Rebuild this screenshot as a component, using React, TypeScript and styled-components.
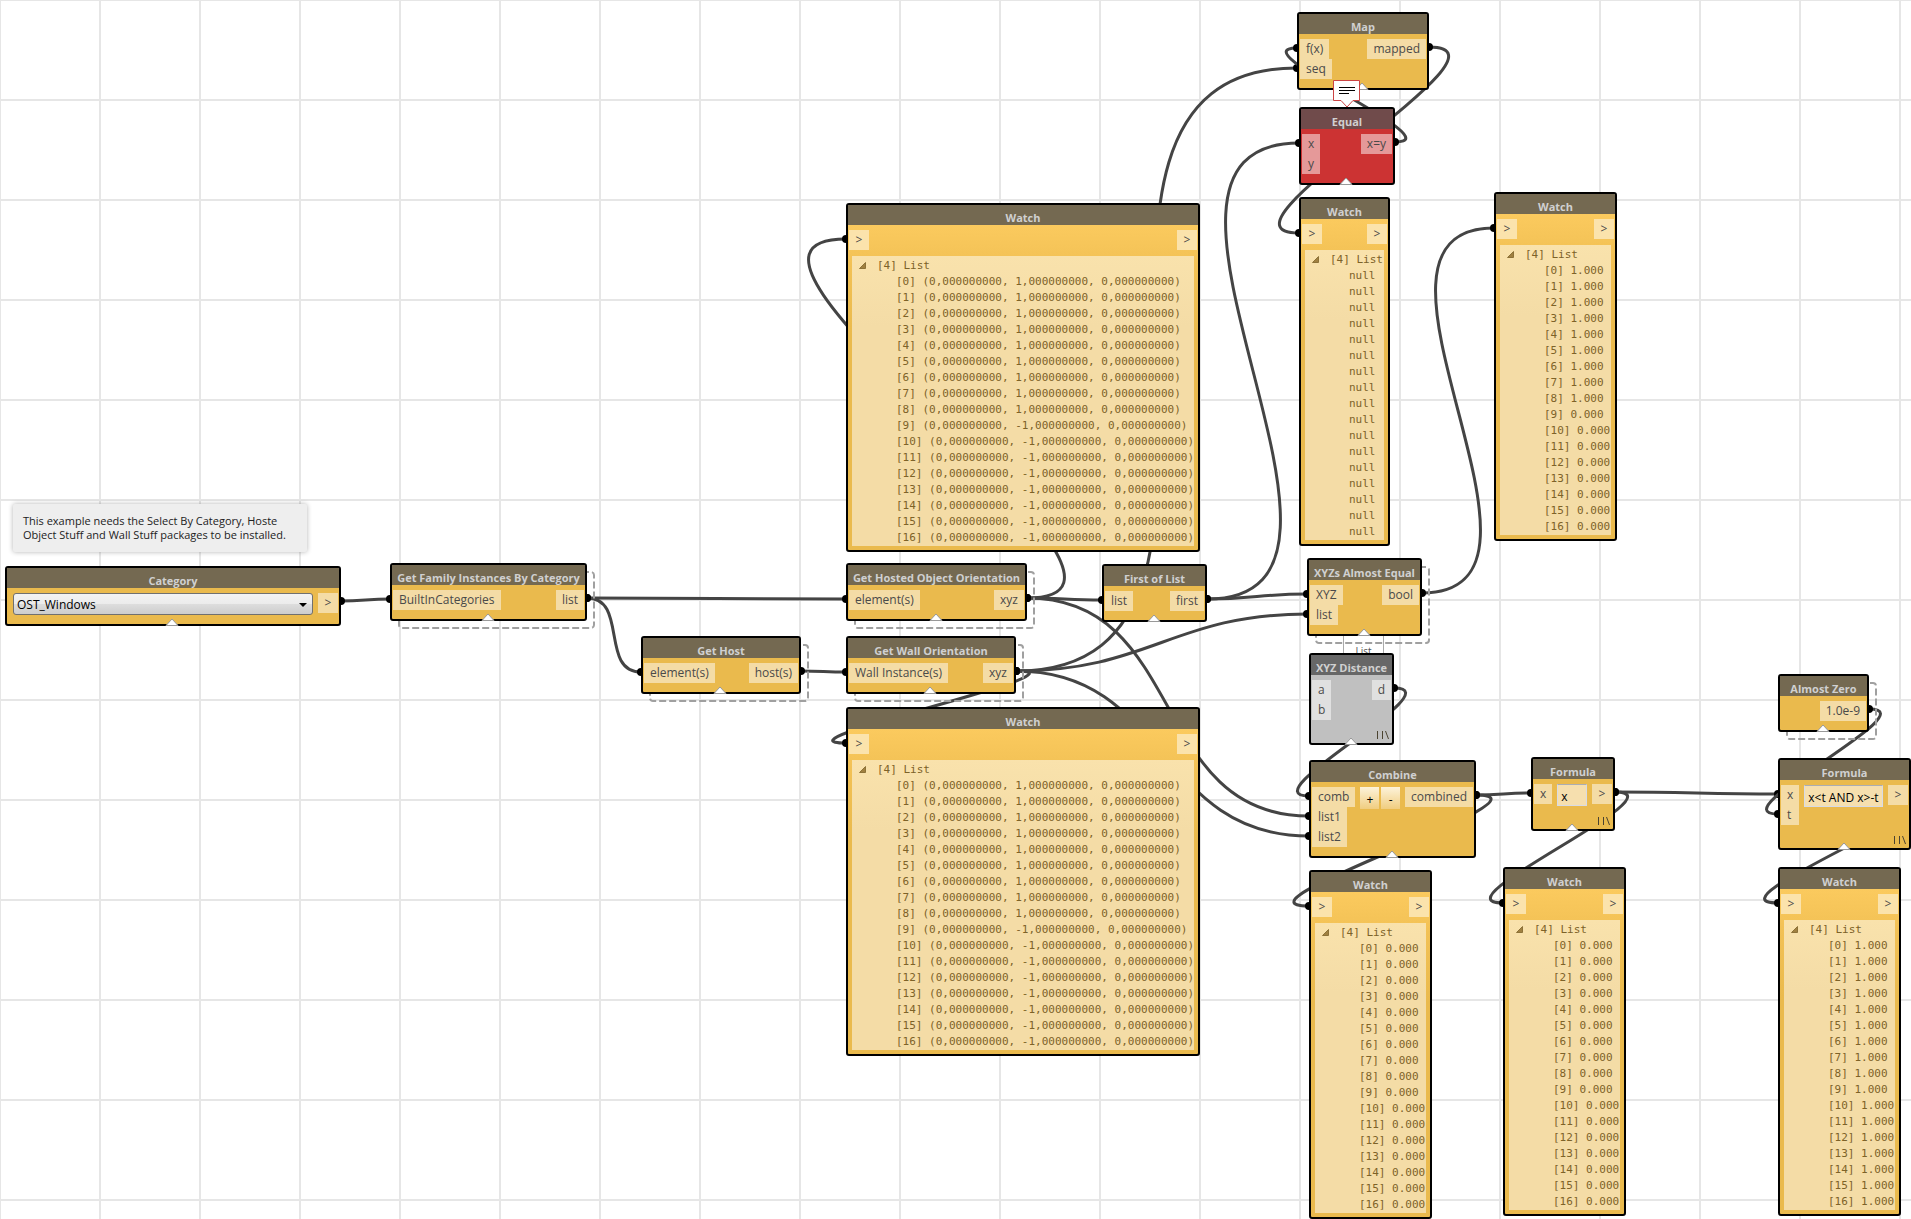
import React from "react";
import styled, { createGlobalStyle } from "styled-components";

const GlobalStyle = createGlobalStyle`
  body {
    margin: 0;
    background: #fff;
    font-family: "Open Sans", "Noto Sans", sans-serif;
    font-size: 12px;
  }
`;

/* ---------- graph model ---------- */

type Tone = "idle" | "error" | "dead" | "watch";

interface NodeModel {
  id: string;
  title: string;
  x: number;
  y: number;
  width: number;
  tone?: Tone;
  inputs: string[];
  output: string;
  control?: React.ReactNode;
  list?: string[];
  custom?: boolean;
  lacing?: boolean;
}

const tones: Record<Tone, { header: string; body: string; port: string }> = {
  idle: { header: "#746951", body: "#eaba4d", port: "#f4dca6" },
  watch: {
    header: "#746951",
    body: "linear-gradient(#fbca5e, #fbca5e 20px, #f2c155 60px, #eaba4d 130px)",
    port: "#fbe3ac",
  },
  error: { header: "#704b4b", body: "#cc3333", port: "#e59999" },
  dead: { header: "#676767", body: "#c0c0c0", port: "#e0e0e0" },
};

const numbered = (value: (index: number) => string) =>
  Array.from({ length: 17 }, (_, i) => `[${i}] ${value(i)}`);

const vectors = numbered((i) => `(0,000000000, ${i < 9 ? "1" : "-1"},000000000, 0,000000000)`);
const zeros = numbered(() => "0.000");
const ones = numbered(() => "1.000");
const mixed = numbered((i) => (i < 9 ? "1.000" : "0.000"));
const nulls = Array.from({ length: 17 }, () => "null");

/* ---------- canvas ---------- */

const Canvas = styled.main`
  position: relative;
  height: 100vh;
  overflow: hidden;
  background-color: #fff;
  background-image: linear-gradient(90deg, #e6e6e6 2px, transparent 2px),
    linear-gradient(#e6e6e6 2px, transparent 2px);
  background-size: 100px 100px;
  background-position: -1px -1px;
`;

const WireLayer = styled.svg`
  position: absolute;
  inset: 0;
  width: 100%;
  height: 100%;
  fill: none;
`;

const Note = styled.aside`
  position: absolute;
  left: 13px;
  top: 504px;
  width: 274px;
  padding: 10px;
  background: #eee;
  color: #222;
  font-size: 11px;
  line-height: 14px;
  white-space: pre;
  border-radius: 2px;
  box-shadow: 0 0 5px rgba(0, 0, 0, 0.3);
`;

const Preview = styled.div`
  position: absolute;
  left: 1343px;
  top: 634px;
  width: 39px;
  height: 30px;
  padding-top: 10px;
  border: 1px solid #aaa;
  border-width: 0 1px;
  color: #555;
  font-size: 10px;
  line-height: 14px;
  text-align: center;
`;

/* ---------- node ---------- */

const NodeFrame = styled.section<{ $x: number; $y: number; $width: number }>`
  position: absolute;
  left: ${(p) => p.$x}px;
  top: ${(p) => p.$y}px;
  width: ${(p) => p.$width}px;
`;

const StackOutline = styled.svg`
  position: absolute;
  left: 8px;
  top: 8px;
  width: 100%;
  height: 100%;
  overflow: visible;
  fill: none;
  stroke: #a0a0a0;
  stroke-width: 2;
  stroke-dasharray: 7 3;
`;

const Shell = styled.div<{ $tone: Tone }>`
  position: relative;
  box-sizing: border-box;
  border: 2px solid #000;
  border-radius: 3px;
  background: ${(p) => tones[p.$tone].body};
`;

const Title = styled.h2<{ $tone: Tone }>`
  margin: 0;
  height: 20px;
  padding-top: 3px;
  box-sizing: border-box;
  background: ${(p) => tones[p.$tone].header};
  color: #d0d0d0;
  font-size: 11px;
  font-weight: 700;
  line-height: 20px;
  text-align: center;
  white-space: nowrap;
`;

const Body = styled.div`
  display: flex;
  align-items: flex-start;
  padding: 5px 1px 9px;
`;

const Inputs = styled.div`
  display: flex;
  flex-direction: column;
  align-items: flex-start;
`;

const Middle = styled.div`
  flex: 1;
  display: flex;
  justify-content: center;
  gap: 2px;
  min-width: 0;
  padding: 0 5px;
`;

const Port = styled.span<{ $tone: Tone }>`
  box-sizing: border-box;
  height: 20px;
  min-width: 18px;
  padding: 0 6px;
  background: ${(p) => tones[p.$tone].port};
  color: #4a4a4a;
  font-size: 12px;
  line-height: 20px;
  white-space: nowrap;
`;

const ArrowPort = styled(Port)`
  width: 20px;
  padding: 0;
  text-align: center;
`;

const Lacing = styled.svg`
  display: block;
  width: 13px;
  height: 8px;
  margin: 2px 3px 4px auto;
  fill: none;
  stroke: #4b4330;
`;

const Handle = styled.svg`
  position: absolute;
  left: calc(50% - 8px);
  bottom: -2px;
  width: 14px;
  height: 8px;
`;

const ListPanel = styled.div`
  margin: -3px 4px 4px;
  height: 290px;
  background: linear-gradient(#f9e2ac, #f4dca6 70px);
  color: #7d6228;
  font-family: "DejaVu Sans Mono", "Liberation Mono", monospace;
  font-size: 11px;
  line-height: 16px;
`;

const ListHead = styled.div`
  display: flex;
  align-items: center;
  gap: 11px;
  padding: 2px 0 0 7px;
  white-space: pre;
`;

const Items = styled.ul`
  margin: 0;
  padding: 0 0 0 44px;
  list-style: none;
  white-space: pre;
`;

const CategorySelect = styled.select`
  flex: 1;
  min-width: 0;
  height: 22px;
  padding: 0 0 0 3px;
  appearance: none;
  border: 1px solid #707070;
  border-radius: 3px;
  background: linear-gradient(#f3f3f3, #ebebeb 50%, #dddddd 50%, #cdcdcd);
  color: #000;
  font: inherit;
`;

const SelectBox = styled.label`
  position: relative;
  flex: 1;
  display: flex;
`;

const Caret = styled.span`
  position: absolute;
  right: 6px;
  top: 10px;
  border: 4px solid transparent;
  border-top-color: #000;
  border-bottom-width: 0;
  pointer-events: none;
`;

const FormulaInput = styled.input`
  flex: 1;
  min-width: 0;
  width: 0;
  box-sizing: border-box;
  height: 22px;
  padding: 2px 3px 0;
  border: 1px solid #d8dbe6;
  border-top-color: #abadb3;
  background: #f6dfae;
  color: #000;
  font: inherit;
`;

const StepButton = styled.button`
  width: 20px;
  height: 22px;
  padding: 2px 0 0;
  border: 0;
  background: linear-gradient(#fdf3da, #f0cd80);
  color: #000;
  font: inherit;
`;

const InfoBubble = styled.svg`
  position: absolute;
  left: 1332px;
  top: 79px;
  width: 30px;
  height: 30px;
  fill: #fff;
`;

const GraphNode = ({ node }: { node: NodeModel }) => {
  const tone = node.tone ?? "idle";
  const height = nodeHeight(node);
  return (
    <NodeFrame $x={node.x} $y={node.y} $width={node.width}>
      {node.custom && (
        <StackOutline aria-hidden="true">
          <rect x="1" y="1" width={node.width - 2} height={height - 2} rx="3" />
        </StackOutline>
      )}
      <Shell $tone={tone}>
        <Title $tone={tone}>{node.title}</Title>
        <Body>
          <Inputs>
            {node.inputs.map((name) =>
              name === ">" ? (
                <ArrowPort key={name} $tone={tone}>{name}</ArrowPort>
              ) : (
                <Port key={name} $tone={tone}>{name}</Port>
              )
            )}
          </Inputs>
          <Middle>{node.control}</Middle>
          {node.output === ">" ? (
            <ArrowPort $tone={tone}>&gt;</ArrowPort>
          ) : (
            <Port $tone={tone}>{node.output}</Port>
          )}
        </Body>
        {node.lacing && (
          <Lacing viewBox="0 0 13 8" aria-hidden="true">
            <path d="M1.5 0V8M6.5 0V8M9.5 0L12.5 8" />
          </Lacing>
        )}
        {node.list ? (
          <ListPanel>
            <ListHead>
              <svg width="7" height="9" aria-hidden="true">
                <path d="M6.5 0.5V6.5H0.5Z" fill="#a08040" stroke="#8d7238" />
              </svg>
              [4] List
            </ListHead>
            <Items>
              {node.list.map((text, i) => (
                <li key={i}>{text}</li>
              ))}
            </Items>
          </ListPanel>
        ) : (
          <Handle viewBox="0 0 14 8" aria-hidden="true">
            <path d="M1 7.5L7 1L13 7.5Z" fill="#fff" stroke="#999" />
          </Handle>
        )}
      </Shell>
    </NodeFrame>
  );
};

const nodes: NodeModel[] = [
  {
    id: "category", title: "Category", x: 5, y: 566, width: 336, inputs: [], output: ">",
    control: (
      <SelectBox>
        <CategorySelect aria-label="Category" defaultValue="OST_Windows">
          <option>OST_Windows</option>
        </CategorySelect>
        <Caret />
      </SelectBox>
    ),
  },
  { id: "family", title: "Get Family Instances By Category", x: 390, y: 563, width: 197, inputs: ["BuiltInCategories"], output: "list", custom: true },
  { id: "hosted", title: "Get Hosted Object Orientation", x: 846, y: 563, width: 181, inputs: ["element(s)"], output: "xyz", custom: true },
  { id: "first", title: "First of List", x: 1102, y: 564, width: 105, inputs: ["list"], output: "first" },
  { id: "host", title: "Get Host", x: 641, y: 636, width: 160, inputs: ["element(s)"], output: "host(s)", custom: true },
  { id: "wall", title: "Get Wall Orientation", x: 846, y: 636, width: 170, inputs: ["Wall Instance(s)"], output: "xyz", custom: true },
  { id: "watchTop", title: "Watch", x: 846, y: 203, width: 354, tone: "watch", inputs: [">"], output: ">", list: vectors },
  { id: "watchBottom", title: "Watch", x: 846, y: 707, width: 354, tone: "watch", inputs: [">"], output: ">", list: vectors },
  { id: "map", title: "Map", x: 1297, y: 12, width: 132, inputs: ["f(x)", "seq"], output: "mapped" },
  { id: "equal", title: "Equal", x: 1299, y: 107, width: 96, tone: "error", inputs: ["x", "y"], output: "x=y" },
  { id: "watchNull", title: "Watch", x: 1299, y: 197, width: 91, tone: "watch", inputs: [">"], output: ">", list: nulls },
  { id: "watchBool", title: "Watch", x: 1494, y: 192, width: 123, tone: "watch", inputs: [">"], output: ">", list: mixed },
  { id: "almost", title: "XYZs Almost Equal", x: 1307, y: 558, width: 115, inputs: ["XYZ", "list"], output: "bool", custom: true },
  { id: "distance", title: "XYZ Distance", x: 1309, y: 653, width: 85, tone: "dead", inputs: ["a", "b"], output: "d", lacing: true },
  {
    id: "combine", title: "Combine", x: 1309, y: 760, width: 167, inputs: ["comb", "list1", "list2"], output: "combined",
    control: (
      <>
        <StepButton type="button">+</StepButton>
        <StepButton type="button">-</StepButton>
      </>
    ),
  },
  {
    id: "formula", title: "Formula", x: 1531, y: 757, width: 84, inputs: ["x"], output: ">", lacing: true,
    control: <FormulaInput aria-label="Formula" defaultValue="x" />,
  },
  { id: "watchCombine", title: "Watch", x: 1309, y: 870, width: 123, tone: "watch", inputs: [">"], output: ">", list: zeros },
  { id: "watchFormula", title: "Watch", x: 1503, y: 867, width: 123, tone: "watch", inputs: [">"], output: ">", list: zeros },
  { id: "zero", title: "Almost Zero", x: 1778, y: 674, width: 91, inputs: [], output: "1.0e-9", custom: true },
  {
    id: "formulaAnd", title: "Formula", x: 1778, y: 758, width: 133, inputs: ["x", "t"], output: ">", lacing: true,
    control: <FormulaInput aria-label="Formula" defaultValue="x<t AND x>-t" />,
  },
  { id: "watchAnd", title: "Watch", x: 1778, y: 867, width: 123, tone: "watch", inputs: [">"], output: ">", list: ones },
];

function nodeHeight(node: NodeModel) {
  return 38 + 20 * Math.max(1, node.inputs.length);
}

/* [source node, target node, target input index] */
const links: [string, string, number][] = [
  ["category", "family", 0],
  ["family", "hosted", 0],
  ["family", "host", 0],
  ["host", "wall", 0],
  ["hosted", "watchTop", 0],
  ["hosted", "first", 0],
  ["hosted", "combine", 1],
  ["wall", "map", 1],
  ["wall", "almost", 1],
  ["wall", "watchBottom", 0],
  ["wall", "combine", 2],
  ["first", "equal", 0],
  ["first", "almost", 0],
  ["almost", "watchBool", 0],
  ["map", "watchNull", 0],
  ["equal", "map", 0],
  ["distance", "combine", 0],
  ["combine", "formula", 0],
  ["combine", "watchCombine", 0],
  ["formula", "formulaAnd", 0],
  ["formula", "watchFormula", 0],
  ["zero", "formulaAnd", 1],
  ["formulaAnd", "watchAnd", 0],
];

const Wire = ({ from, to, index }: { from: NodeModel; to: NodeModel; index: number }) => {
  const x0 = from.x + from.width;
  const y0 = from.y + 35;
  const x3 = to.x;
  const y3 = to.y + 36 + 20 * index;
  const reach = 0.45 * Math.hypot(x3 - x0, y3 - y0);
  return (
    <g>
      <path
        d={`M${x0} ${y0}C${x0 + reach} ${y0} ${x3 - reach} ${y3} ${x3} ${y3}`}
        stroke="#444"
        strokeWidth="3"
      />
      <circle cx={x0} cy={y0} r="4" fill="#000" />
      <circle cx={x3} cy={y3} r="4" fill="#000" />
    </g>
  );
};

const find = (id: string) => nodes.find((node) => node.id === id)!;

export default function App() {
  return (
    <>
      <GlobalStyle />
      <Canvas>
        <Note>{"This example needs the Select By Category, Hoste\nObject Stuff and Wall Stuff packages to be installed."}</Note>
        <WireLayer aria-hidden="true">
          {links.map(([from, to, index]) => (
            <Wire key={`${from}-${to}-${index}`} from={find(from)} to={find(to)} index={index} />
          ))}
        </WireLayer>
        <Preview>List</Preview>
        {nodes.map((node) => (
          <GraphNode key={node.id} node={node} />
        ))}
        <InfoBubble viewBox="0 0 30 30" aria-hidden="true">
          <path d="M1.5 1.5H27.5V21.5H21L15 28L9 21.5H1.5Z" stroke="#c44" />
          <path d="M7 8.5H23M7 11.5H23M7 14.5H17" stroke="#000" />
        </InfoBubble>
      </Canvas>
    </>
  );
}
